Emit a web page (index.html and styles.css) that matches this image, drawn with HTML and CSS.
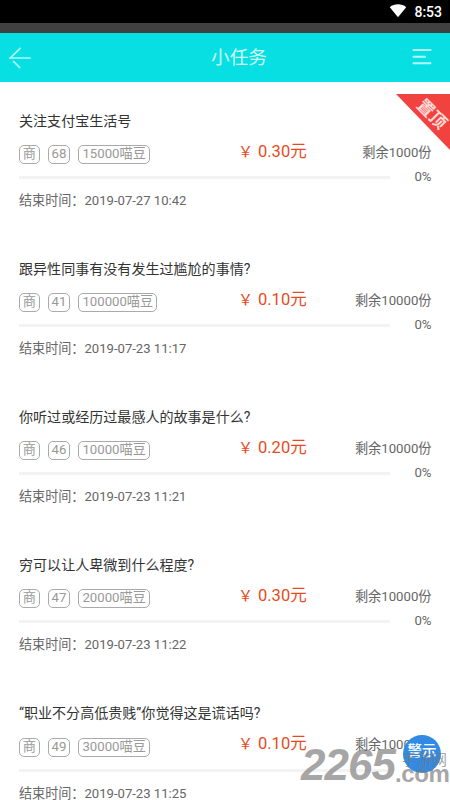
FILE: index.html
```html
<!DOCTYPE html>
<html lang="zh-CN">
<head>
  <meta charset="UTF-8" />
  <meta name="viewport" content="width=device-width, initial-scale=1.0" />
  <title>小任务</title>
  <link rel="stylesheet" href="styles.css">
</head>

<body>
  <div class="screen">

    <!-- Status bar -->
    <div class="status">
      <svg class="wifi" width="18" height="14" viewBox="0 0 18 14"><path d="M.8 3.2C5.2-.6 12.8-.6 17.2 3.2L9 13.3z" fill="#fff"/></svg>
      <span>8:53</span>
    </div>
    <div class="strip"></div>

    <!-- Header -->
    <header class="header">
      <svg class="back" width="22" height="22" viewBox="0 0 22 22"><path d="M11.2 1.3 1.2 11H21M4.6 14.5l6 6" /></svg>
      <h1>小任务</h1>
      <svg class="menu" width="20" height="18" viewBox="0 0 20 18"><path d="M1.5 2h17M1.5 8.7h11.5M1.5 15.2h17" /></svg>
    </header>

    <!-- Tasks -->
    <main class="list">
      <div class="task">
        <h2>关注支付宝生活号</h2>
        <div class="info">
          <div class="tags"><span>商</span><span>68</span><span>15000喵豆</span></div>
          <div class="price"><span class="yen">￥</span>0.30元</div>
          <div class="left">剩余1000份</div>
        </div>
        <div class="progress"><div class="bar"></div><span>0%</span></div>
        <p>结束时间：2019-07-27 10:42</p>
        <div class="ribbon"><span>置顶</span></div>
      </div>

      <div class="task">
        <h2>跟异性同事有没有发生过尴尬的事情?</h2>
        <div class="info">
          <div class="tags"><span>商</span><span>41</span><span>100000喵豆</span></div>
          <div class="price"><span class="yen">￥</span>0.10元</div>
          <div class="left">剩余10000份</div>
        </div>
        <div class="progress"><div class="bar"></div><span>0%</span></div>
        <p>结束时间：2019-07-23 11:17</p>
      </div>

      <div class="task">
        <h2>你听过或经历过最感人的故事是什么?</h2>
        <div class="info">
          <div class="tags"><span>商</span><span>46</span><span>10000喵豆</span></div>
          <div class="price"><span class="yen">￥</span>0.20元</div>
          <div class="left">剩余10000份</div>
        </div>
        <div class="progress"><div class="bar"></div><span>0%</span></div>
        <p>结束时间：2019-07-23 11:21</p>
      </div>

      <div class="task">
        <h2>穷可以让人卑微到什么程度?</h2>
        <div class="info">
          <div class="tags"><span>商</span><span>47</span><span>20000喵豆</span></div>
          <div class="price"><span class="yen">￥</span>0.30元</div>
          <div class="left">剩余10000份</div>
        </div>
        <div class="progress"><div class="bar"></div><span>0%</span></div>
        <p>结束时间：2019-07-23 11:22</p>
      </div>

      <div class="task">
        <h2>“职业不分高低贵贱”你觉得这是谎话吗?</h2>
        <div class="info">
          <div class="tags"><span>商</span><span>49</span><span>30000喵豆</span></div>
          <div class="price"><span class="yen">￥</span>0.10元</div>
          <div class="left">剩余10000份</div>
        </div>
        <div class="progress"><div class="bar"></div></div>
        <p>结束时间：2019-07-23 11:25</p>
      </div>
    </main>

    <div class="warn">警示</div>

    <!-- Watermark -->
    <div class="mark">
      <span class="mark-num">2265</span>
      <div class="mark-side">
        <span class="mark-cn">手游网</span>
        <span class="mark-com">.com</span>
      </div>
    </div>

  </div>
</body>
</html>
```
FILE: styles.css
```css
body {
  margin: 0;
  font-family: Roboto, "Noto Sans CJK SC", sans-serif;
  background: #fff;
  color: #666;
}

.screen {
  position: relative;
  width: 450px;
  height: 800px;
  overflow: hidden;
}

.status {
  display: flex;
  justify-content: flex-end;
  align-items: center;
  gap: 7px;
  height: 23px;
  padding-right: 8px;
  background: #000;
  color: #fff;
  font-size: 14px;
  font-weight: 500;
}

.wifi {
  margin-top: -1px;
}

.strip {
  height: 10px;
  background: #404040;
}

.header {
  display: grid;
  grid-template-columns: 22px 1fr 20px;
  align-items: center;
  height: 49px;
  padding: 0 18px 0 8px;
  background: #08dfe2;
  color: #d0fefe;
}

.header h1 {
  margin: 0 0 0 36px;
  font-size: 18.7px;
  line-height: 28px;
  font-weight: 400;
  text-align: center;
}

.back, .menu {
  fill: none;
  stroke: #b4fcfc;
  stroke-width: 1.7;
  stroke-linecap: round;
}

.back {
  margin-left: 1px;
}

.menu {
  margin-top: -1px;
  stroke-width: 2;
}

.task {
  position: relative;
  box-sizing: border-box;
  height: 148.15px;
  padding: 28.6px 18.5px 0 19px;
}

.task h2 {
  margin: 0;
  font-size: 14.05px;
  line-height: 20px;
  font-weight: 400;
  color: #333;
}

.info {
  display: grid;
  grid-template-columns: 219px 80px 1fr;
  height: 31.4px;
  padding-top: 10px;
  box-sizing: border-box;
}

.tags {
  display: flex;
  align-items: flex-start;
  gap: 8px;
  padding-top: 4.4px;
}

.tags span {
  box-sizing: border-box;
  height: 19px;
  padding: 0 3px;
  border: 1px solid #aaa;
  border-radius: 5px;
  color: #999;
  font-size: 13.2px;
  line-height: 16px;
}

.tags span:first-child {
  padding: 0 2.7px;
}

.price {
  color: #e64a22;
  font-size: 16.5px;
  line-height: 22px;
  white-space: nowrap;
}

.yen {
  display: inline-block;
  width: 20px;
  font-size: 15px;
}

.left {
  font-size: 13.2px;
  line-height: 24px;
  text-align: right;
  white-space: nowrap;
}

.progress {
  display: flex;
  justify-content: space-between;
  align-items: center;
  height: 30px;
}

.bar {
  width: 371px;
  height: 3px;
  margin-top: 1px;
  background: #f3f3f3;
}

.progress span {
  margin-top: -1px;
  font-size: 13.2px;
}

.task p {
  margin: 0;
  font-size: 13.1px;
  line-height: 18px;
}

.ribbon {
  position: absolute;
  top: 12px;
  right: 0;
  width: 54px;
  height: 56px;
  background: #f2423f;
  clip-path: polygon(0 0, 100% 0, 100% 100%);
}

.ribbon span {
  position: absolute;
  left: 17px;
  top: 9px;
  width: 38px;
  color: #ffd9d7;
  font-size: 17px;
  line-height: 22px;
  font-weight: 700;
  text-align: center;
  transform: rotate(45deg);
}

.warn {
  position: absolute;
  left: 403px;
  top: 735px;
  width: 38px;
  height: 38px;
  border-radius: 50%;
  background: #318be5;
  color: #fff;
  font-size: 14.5px;
  line-height: 34px;
  font-weight: 500;
  text-align: center;
}

.mark {
  position: absolute;
  left: 301px;
  top: 743px;
  display: flex;
  color: #777;
  opacity: 0.65;
}

.mark-num {
  width: 94px;
  font: italic 700 44px/44px "Liberation Sans", sans-serif;
  letter-spacing: -1px;
}

.mark-side {
  display: flex;
  flex-direction: column;
}

.mark-cn {
  margin: 9px 0 0 7px;
  font-size: 15px;
  line-height: 16px;
}

.mark-com {
  margin-top: -6px;
  font: 700 24px/24px "Liberation Sans", sans-serif;
  letter-spacing: -0.4px;
}
```
